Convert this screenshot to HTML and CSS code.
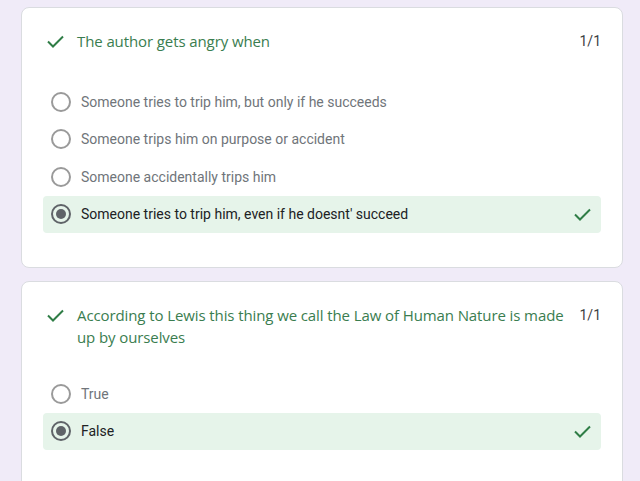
FILE: index.html
```html
<!DOCTYPE html>
<html>
<head>
<meta charset="utf-8">
<link rel="stylesheet" href="styles.css">
</head>
<body>
<div class="page">
  <section class="card">
    <div class="q-head">
      <svg class="q-check" width="17" height="13" viewBox="0 0 17 13"><polyline points="1,6.5 6,11.5 16,1.5" fill="none" stroke="#2f7d46" stroke-width="2"/></svg>
      <div class="q-title">The author gets angry when</div>
      <div class="q-score">1/1</div>
    </div>
    <div class="options">
      <div class="opt"><span class="radio"></span><span class="opt-text">Someone tries to trip him, but only if he succeeds</span></div>
      <div class="opt"><span class="radio"></span><span class="opt-text">Someone trips him on purpose or accident</span></div>
      <div class="opt"><span class="radio"></span><span class="opt-text">Someone accidentally trips him</span></div>
      <div class="opt opt--correct"><span class="radio radio--on"></span><span class="opt-text">Someone tries to trip him, even if he doesnt' succeed</span>
        <svg class="opt-check" width="17" height="13" viewBox="0 0 17 13"><polyline points="1,6.5 6,11.5 16,1.5" fill="none" stroke="#2f7d46" stroke-width="2"/></svg>
      </div>
    </div>
  </section>
  <section class="card card--tall">
    <div class="q-head q-head--wrap">
      <svg class="q-check" width="17" height="13" viewBox="0 0 17 13"><polyline points="1,6.5 6,11.5 16,1.5" fill="none" stroke="#2f7d46" stroke-width="2"/></svg>
      <div class="q-title">According to Lewis this thing we call the Law of Human Nature is made up by ourselves</div>
      <div class="q-score">1/1</div>
    </div>
    <div class="options">
      <div class="opt"><span class="radio"></span><span class="opt-text">True</span></div>
      <div class="opt opt--correct"><span class="radio radio--on"></span><span class="opt-text">False</span>
        <svg class="opt-check" width="17" height="13" viewBox="0 0 17 13"><polyline points="1,6.5 6,11.5 16,1.5" fill="none" stroke="#2f7d46" stroke-width="2"/></svg>
      </div>
    </div>
  </section>
</div>
</body>
</html>
```
FILE: styles.css
```css
html, body {
  margin: 0;
  padding: 0;
  background: #f0ebf8;
  overflow: hidden;
}
.page {
  padding: 7px 0 0 21px;
  display: flex;
  flex-direction: column;
  gap: 13px;
}
.card {
  width: 602px;
  box-sizing: border-box;
  background: #fff;
  border: 1px solid #dadce0;
  border-radius: 8px;
  padding: 22px 21px 34px 21px;
}
.card--tall {
  padding-bottom: 60px;
}
.q-head {
  display: flex;
  align-items: flex-start;
  margin-bottom: 31px;
  padding-left: 4px;
}
.q-head--wrap {
  margin-bottom: 27px;
}
.q-check {
  flex: none;
  margin-top: 5px;
  margin-right: 13px;
}
.q-title {
  flex: 1;
  font-family: "Open Sans", sans-serif;
  font-size: 15px;
  line-height: 22px;
  letter-spacing: -0.1px;
  color: #3a7d4f;
}
.q-score {
  flex: none;
  margin-left: 6px;
  font-family: Roboto, sans-serif;
  font-size: 14px;
  line-height: 22px;
  color: #3c4043;
}
.options {
  display: flex;
  flex-direction: column;
}
.opt {
  display: flex;
  align-items: center;
  height: 37.5px;
  padding: 0 8px;
  border-radius: 4px;
}
.opt--correct {
  background: #e6f4ea;
}
.radio {
  flex: none;
  width: 16px;
  height: 16px;
  border: 2px solid #9a9a9a;
  border-radius: 50%;
  margin-right: 10px;
  position: relative;
}
.radio--on {
  border-color: #5f6368;
}
.radio--on::after {
  content: "";
  position: absolute;
  left: 3px;
  top: 3px;
  width: 10px;
  height: 10px;
  border-radius: 50%;
  background: #5f6368;
}
.opt-text {
  flex: 1;
  font-family: Roboto, sans-serif;
  font-size: 14px;
  color: #70757a;
}
.opt--correct .opt-text {
  color: #202124;
}
.opt-check {
  flex: none;
  margin-right: 2px;
}
```
